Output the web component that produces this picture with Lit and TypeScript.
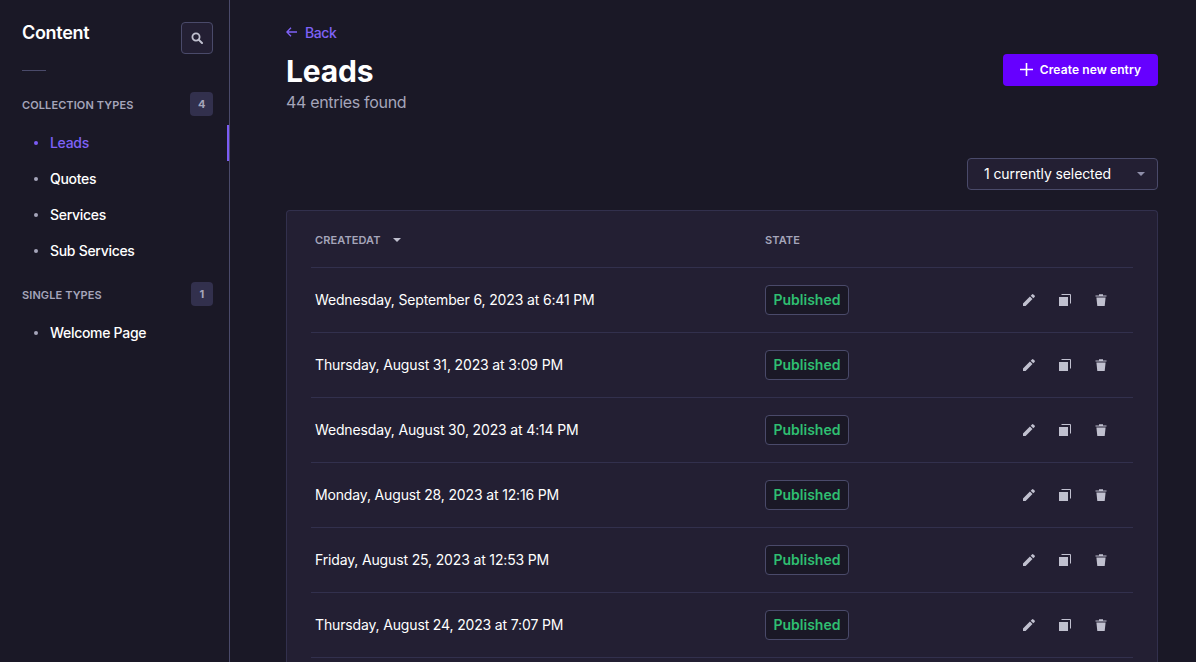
import { LitElement, html, css, svg } from "lit";
import { customElement } from "lit/decorators.js";

const rows = [
  "Wednesday, September 6, 2023 at 6:41 PM",
  "Thursday, August 31, 2023 at 3:09 PM",
  "Wednesday, August 30, 2023 at 4:14 PM",
  "Monday, August 28, 2023 at 12:16 PM",
  "Friday, August 25, 2023 at 12:53 PM",
  "Thursday, August 24, 2023 at 7:07 PM",
];

const pencil = svg`<svg class="ic" width="12" height="12" viewBox="0 0 12 12"><path d="M0 12V9.4L6.9 2.5 9.5 5.1 2.6 12Z M7.7 1.7 9 .4a1 1 0 0 1 1.4 0l1.2 1.2a1 1 0 0 1 0 1.4L10.3 4.3Z" fill="currentColor"/></svg>`;
const copy = svg`<svg class="ic" width="12" height="12" viewBox="0 0 12 12"><path d="M0 3h9v9H0Z" fill="currentColor"/><path d="M2.5 .5H11.5V9.5" fill="none" stroke="currentColor" stroke-width="1"/></svg>`;
const trash = svg`<svg class="ic" width="12" height="12" viewBox="0 0 12 12"><path d="M.5 1.6h11v1H.5Z M4 .3h4v1.3H4Z M1.4 3.4h9.2L9.7 12H2.3Z" fill="currentColor"/></svg>`;

@customElement("app-root")
export class AppRoot extends LitElement {
  static styles = css`
    :host {
      display: block;
      height: 662px;
      overflow: hidden;
      background: #1a1826;
      color: #fff;
      font-family: Inter, "Liberation Sans", sans-serif;
      font-size: 14px;
    }
    * { box-sizing: border-box; }
    .app { display: flex; height: 662px; }
    .side {
      width: 230px;
      flex: none;
      border-right: 1px solid #4a4a6a;
      padding-top: 22px;
    }
    .side-head {
      display: flex;
      justify-content: space-between;
      padding: 0 16px 0 22px;
    }
    .side-title { font-size: 18px; font-weight: 600; line-height: 22px; letter-spacing: -0.3px; }
    .search {
      width: 32px;
      height: 32px;
      border: 1px solid #4a4a6a;
      border-radius: 4px;
      background: #231f33;
      color: #c0c0cf;
      display: flex;
      align-items: center;
      justify-content: center;
    }
    .divider { width: 24px; height: 1px; background: #4a4a6a; margin: 16px 0 21px 22px; }
    .sec {
      display: flex;
      justify-content: space-between;
      align-items: center;
      padding: 0 16px 0 22px;
      height: 24px;
      color: #a5a5ba;
      font-size: 11px;
      font-weight: 600;
      letter-spacing: 0.1px;
    }
    .sec-label { padding-top: 2px; }
    .count {
      height: 24px;
      min-width: 22px;
      padding: 0 7.5px;
      border-radius: 4px;
      background: #32304d;
      color: #a5a5ba;
      font-size: 11px;
      font-weight: 700;
      display: flex;
      align-items: center;
      justify-content: center;
    }
    .nav { margin: 9px 0 13px; }
    .nav a {
      height: 36px;
      display: flex;
      align-items: center;
      padding: 0 0 1px 34px;
      gap: 12px;
      color: #fff;
      font-weight: 500;
      letter-spacing: -0.3px;
    }
    .dot { width: 4px; height: 4px; border-radius: 50%; background: #a5a5ba; }
    .nav a.on { color: #7f62f7; border-right: 2px solid #7b5cf5; }
    .nav a.on .dot { background: #7b5cf5; }
    .main { flex: 1; padding: 22px 38px 0 56px; min-width: 0; }
    .back {
      display: flex;
      align-items: center;
      gap: 8px;
      height: 20px;
      color: #7f62f7;
      font-size: 14px;
      font-weight: 500;
      letter-spacing: -0.4px;
    }
    .head { display: flex; justify-content: space-between; align-items: flex-start; margin-top: 2px; }
    h1 { margin: 7px 0 0; font-size: 30px; line-height: 40px; font-weight: 700; letter-spacing: -0.2px; }
    .sub { color: #a5a5ba; font-size: 16px; line-height: 20px; letter-spacing: -0.32px; margin-top: 1px; }
    .create {
      margin-top: 10px;
      width: 155px;
      height: 32px;
      border-radius: 4px;
      background: #6600ff;
      color: #fff;
      font-size: 12px;
      font-weight: 600;
      letter-spacing: 0.1px;
      padding-bottom: 1px;
      display: flex;
      align-items: center;
      justify-content: center;
      gap: 7px;
    }
    .tools { display: flex; justify-content: flex-end; margin-top: 46px; }
    .select {
      width: 191px;
      height: 32px;
      border: 1px solid #4a4a6a;
      border-radius: 4px;
      background: #231f33;
      display: flex;
      align-items: center;
      justify-content: space-between;
      padding: 0 12px 1px 16px;
      font-size: 14px;
      letter-spacing: -0.1px;
    }
    .tri { width: 0; height: 0; border-left: 4px solid transparent; border-right: 4px solid transparent; border-top: 4px solid currentColor; }
    .tri-muted { color: #8e8ea9; }
    .card {
      margin-top: 20px;
      background: #231f33;
      border: 1px solid #32304d;
      border-bottom: 0;
      border-radius: 4px 4px 0 0;
      padding: 0 24px;
    }
    .row {
      display: grid;
      grid-template-columns: 450px 1fr auto;
      align-items: center;
      height: 65px;
      border-top: 1px solid #32304d;
      padding-left: 4px;
    }
    .row.th {
      height: 56px;
      border-top: 0;
      padding-top: 2px;
      color: #a5a5ba;
      font-size: 11px;
      font-weight: 600;
      letter-spacing: 0.1px;
    }
    .date { padding-bottom: 1px; letter-spacing: -0.15px; }
    .sort { display: flex; align-items: center; gap: 12px; }
    .sort .tri { color: #c0c0cf; }
    .badge {
      display: inline-flex;
      align-items: center;
      height: 30px;
      width: 84px;
      justify-content: center;
      border: 1px solid #4a4a6a;
      border-radius: 4px;
      background: #1a1826;
      color: #2fbf71;
      font-weight: 600;
      padding-bottom: 1px;
    }
    .acts { display: flex; gap: 24px; padding-right: 26px; color: #c0c0cf; }
    .ic { display: block; }
    .tail { height: 10px; border-top: 1px solid #32304d; }
  `;

  render() {
    return html`<div class="app">
      <aside class="side">
        <div class="side-head">
          <div class="side-title">Content</div>
          <div class="search">
            <svg width="12" height="12" viewBox="0 0 12 12"><circle cx="5" cy="5" r="3.6" fill="none" stroke="currentColor" stroke-width="1.8"/><path d="M7.6 7.6 11 11" stroke="currentColor" stroke-width="2" stroke-linecap="round"/></svg>
          </div>
        </div>
        <div class="divider"></div>
        <div class="sec"><span class="sec-label">COLLECTION TYPES</span><span class="count">4</span></div>
        <nav class="nav">
          <a class="on"><span class="dot"></span>Leads</a>
          <a><span class="dot"></span>Quotes</a>
          <a><span class="dot"></span>Services</a>
          <a><span class="dot"></span>Sub Services</a>
        </nav>
        <div class="sec"><span class="sec-label">SINGLE TYPES</span><span class="count">1</span></div>
        <nav class="nav">
          <a><span class="dot"></span>Welcome Page</a>
        </nav>
      </aside>
      <main class="main">
        <div class="back">
          <svg width="11" height="10" viewBox="0 0 11 10"><path d="M5 .7.8 5 5 9.3M1 5h10" fill="none" stroke="currentColor" stroke-width="1.3"/></svg>
          <span>Back</span>
        </div>
        <div class="head">
          <div>
            <h1>Leads</h1>
            <div class="sub">44 entries found</div>
          </div>
          <div class="create">
            <svg width="13" height="13" viewBox="0 0 13 13"><path d="M6.5 0v13M0 6.5h13" stroke="#fff" stroke-width="1.6"/></svg>
            <span>Create new entry</span>
          </div>
        </div>
        <div class="tools">
          <div class="select"><span>1 currently selected</span><span class="tri tri-muted"></span></div>
        </div>
        <section class="card">
          <div class="row th">
            <div class="sort"><span>CREATEDAT</span><span class="tri"></span></div>
            <div>STATE</div>
            <div></div>
          </div>
          ${rows.map(
            (r) => html`<div class="row">
              <div class="date">${r}</div>
              <div><span class="badge">Published</span></div>
              <div class="acts">${pencil}${copy}${trash}</div>
            </div>`
          )}
          <div class="tail"></div>
        </section>
      </main>
    </div>`;
  }
}
